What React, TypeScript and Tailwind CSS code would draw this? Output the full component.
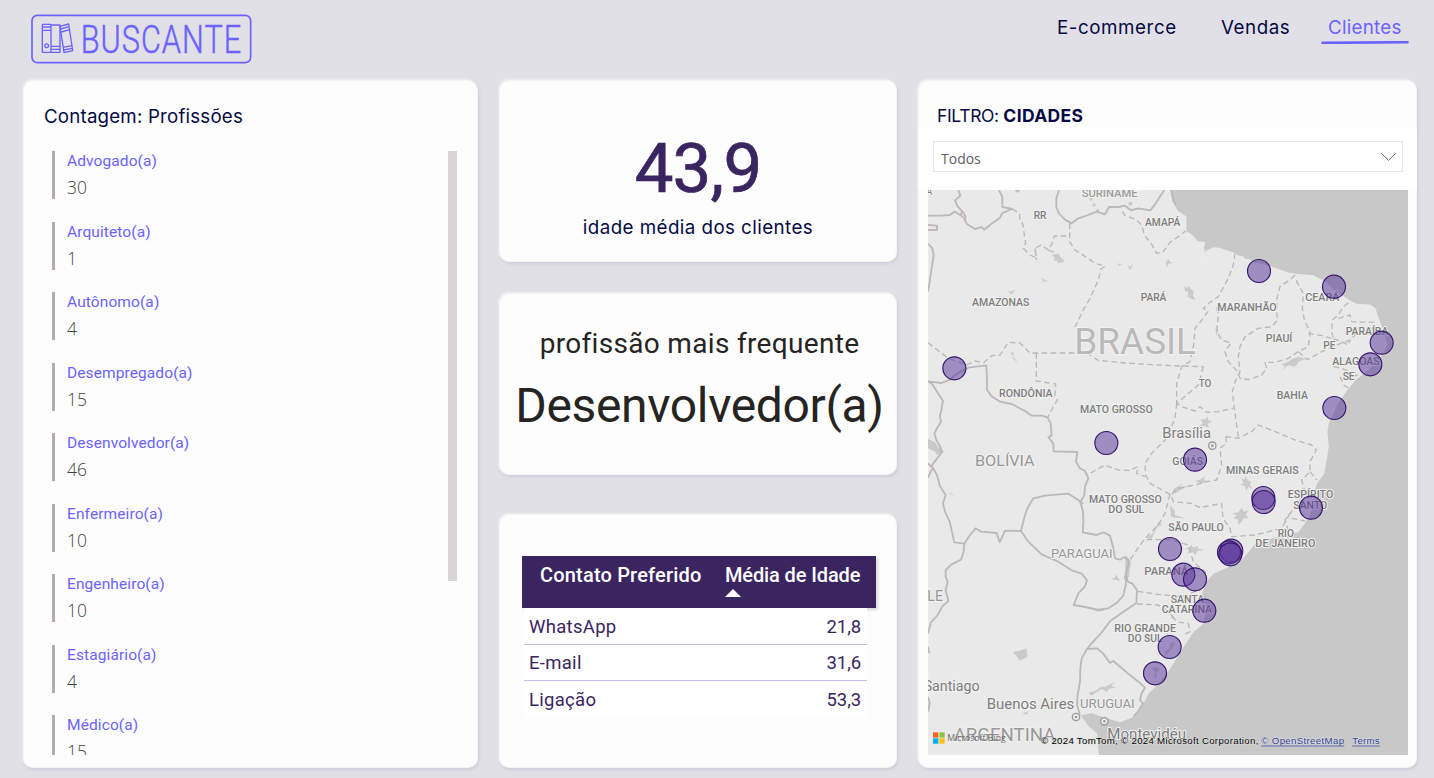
import type { ReactNode } from "react";

const professions: [string, number][] = [
  ["Advogado(a)", 30],
  ["Arquiteto(a)", 1],
  ["Autônomo(a)", 4],
  ["Desempregado(a)", 15],
  ["Desenvolvedor(a)", 46],
  ["Enfermeiro(a)", 10],
  ["Engenheiro(a)", 10],
  ["Estagiário(a)", 4],
  ["Médico(a)", 15],
];

const contacts = [
  ["WhatsApp", "21,8"],
  ["E-mail", "31,6"],
  ["Ligação", "53,3"],
];

// Map space: three units per pixel. text, left, right, baseline, size, colour
type Label = [string, number, number, number, number, string];
const dark = "#7d7d7d";
const mid = "#979797";
const labels: Label[] = [
  ["A", 4, 22, 30, 30, dark],
  ["SURINAME", 470, 638, 35, 34, "#9c9c9c"],
  ["RR", 326, 364, 102, 34, dark],
  ["AMAPÁ", 660, 766, 123, 34, dark],
  ["AMAZONAS", 141, 313, 362, 34, dark],
  ["PARÁ", 647, 724, 348, 34, dark],
  ["BRASIL", 448, 813, 507, 110, "#b9b9b9"],
  ["MARANHÃO", 877, 1055, 377, 34, dark],
  ["CEARÁ", 1141, 1243, 348, 34, dark],
  ["PIAUÍ", 1022, 1102, 471, 34, dark],
  ["PARAÍBA", 1262, 1390, 450, 34, dark],
  ["PE", 1195, 1231, 491, 34, dark],
  ["ALAGOAS", 1222, 1364, 540, 34, dark],
  ["SE", 1253, 1289, 584, 34, dark],
  ["TO", 821, 859, 605, 34, dark],
  ["RONDÔNIA", 222, 383, 636, 34, dark],
  ["MATO GROSSO", 465, 683, 684, 34, dark],
  ["BAHIA", 1055, 1149, 642, 34, dark],
  ["Brasília", 712, 858, 758, 45, dark],
  ["BOLÍVIA", 150, 329, 844, 44, mid],
  ["GOIÁS", 742, 834, 840, 34, dark],
  ["MINAS GERAIS", 903, 1121, 868, 34, dark],
  ["MATO GROSSO", 492, 710, 953, 34, dark],
  ["DO SUL", 550, 658, 984, 34, dark],
  ["ESPÍRITO", 1088, 1225, 940, 34, dark],
  ["SANTO", 1105, 1207, 972, 34, dark],
  ["SÃO PAULO", 730, 896, 1039, 34, dark],
  ["RIO", 1058, 1107, 1056, 34, dark],
  ["DE JANEIRO", 991, 1171, 1087, 34, dark],
  ["PARAGUAI", 378, 563, 1118, 40, mid],
  ["PARANÁ", 658, 790, 1169, 34, dark],
  ["SANTA", 737, 838, 1254, 34, dark],
  ["CATARINA", 710, 861, 1285, 34, dark],
  ["RIO GRANDE", 568, 753, 1340, 34, dark],
  ["DO SUL", 608, 713, 1370, 34, dark],
  ["LE", 7, 54, 1248, 43, mid],
  ["Santiago", -4, 164, 1518, 45, dark],
  ["Buenos Aires", 185, 448, 1572, 45, dark],
  ["URUGUAI", 465, 629, 1569, 40, mid],
  ["ARGENTINA", 86, 391, 1669, 56, mid],
  ["Montevidéu", 547, 783, 1661, 45, dark],
];

const bubbles = [
  [88, 550], [1002, 258], [1227, 305], [1370, 473], [1336, 538], [1228, 669],
  [544, 774], [810, 824], [1015, 939], [1016, 951], [1158, 968], [919, 1097],
  [912, 1102], [916, 1108], [735, 1092], [775, 1169], [810, 1183], [838, 1277],
  [734, 1386], [690, 1465],
];

const countryBorders = [
  // Colombia and Venezuela
  "M9 92H45L75 90L88 80L106 90L112 80L98 64L90 46L106 32L100 15",
  "M106 90L118 100L125 116L150 132L170 126L177 134L200 116L225 98L232 84L262 72L232 66L232 36L222 15",
  "M9 120L36 122V135H9",
  "M112 78L122 96L118 108",
  "M272 15L277 20L284 15",
  // Guianas
  "M402 15L394 40L394 66L402 86L420 104L440 115L460 100L490 90L515 80L540 88L552 66L580 66L600 62L618 76L640 70L676 76L690 58L708 30L718 15",
  "M738 15L744 38L752 60",
  // Peru, Acre and Rondônia
  "M9 176L22 190L26 210L20 250L14 290L9 320",
  "M9 589L50 594L75 584L90 570L130 548L184 541L186 575L186 615L200 634L225 650L260 657L300 678L320 692L352 692L368 698L377 715L380 752L370 756L385 776L386 799L457 801L453 830L465 850L480 858L490 880L480 905L478 930L466 952L474 980L475 1010L473 1042L515 1050L535 1042L555 1052L565 1090L570 1120L585 1124L598 1116L612 1128L606 1155L600 1180",
  // Bolivia west side and Chile
  "M9 590L20 595L36 620L54 648L48 680L44 694L48 710L35 732L28 745L34 766L46 785L50 802L20 842L36 870L45 904L62 930L54 955L60 980L74 1010L88 1072L118 1076L135 1050L152 1030L168 1040L215 1044L224 1072L240 1037L288 1038L300 990L308 968L325 940L360 932L430 926L460 945L474 957",
  "M9 835L22 848M9 878L18 858L24 850",
  "M118 1076L116 1100L108 1124L80 1138L62 1155L62 1175L68 1190L62 1214L70 1248L52 1264L38 1290L18 1312L9 1345",
  "M9 1385L13 1405M9 1536L14 1553L10 1580",
  // Paraguay
  "M288 1038L310 1070L350 1108L400 1130L440 1156L470 1166L486 1186L480 1204L460 1225L446 1260L480 1266L520 1275L550 1270L575 1254L595 1232L602 1200L604 1170L608 1190L622 1196L636 1215L634 1254L590 1284L556 1308L530 1342L500 1375L486 1392L470 1420L466 1450L465 1490L458 1530L456 1560L465 1590",
  "M486 1392L516 1390L535 1406L555 1434L565 1428L586 1446L610 1466L640 1490L660 1508L650 1525L645 1545L654 1555L640 1578L625 1595",
];

const stateBorders = [
  "M262 72L284 85L284 100L294 120L298 150L302 175L295 190L315 210L334 218L330 190L348 180L370 195L380 178L388 153H434",
  "M434 115V170L450 195L480 214L510 235L540 244L528 252L520 285L495 340L475 375L450 426",
  "M370 195L395 207M330 190L334 225",
  "M592 80L600 92L630 102L650 120L658 150L680 178L695 205L715 200L735 172L760 155L782 138",
  "M9 473L70 520L125 540L150 528L175 534L200 512L225 510L250 472L285 474L315 504H485L520 526L600 534L735 542L835 545",
  "M334 504L334 588L392 597L390 632L397 645L385 665L368 698",
  "M930 205L925 240L910 280L880 335L855 352L835 370L850 378L835 400L810 430L806 480L795 530L770 545L755 595L755 655",
  "M875 368L880 390L875 440L890 465L918 474L900 500L910 530L938 560L945 580L970 584L1010 570L1025 550L1020 532L1050 532L1090 520L1120 500L1150 485L1155 440L1138 405L1132 370L1135 325L1115 290L1118 278",
  "M1110 270L1098 282L1065 305L1055 345L1055 385L1058 405L1040 425L1000 430L960 455L945 485L940 515L945 560L930 590L922 620L928 670L935 720L940 758",
  "M1150 445L1190 452L1225 462L1220 440L1222 405L1240 390L1255 365L1275 350",
  "M1120 500L1148 524L1190 500L1240 478L1275 465L1290 450L1320 430L1355 430",
  "M1225 462L1250 470L1270 480L1275 465M1240 400L1275 390L1280 410L1350 412",
  "M1225 545L1250 550L1300 570L1275 578M1245 575L1258 602L1272 610",
  "M835 545L820 600L755 655L770 665L810 678L825 665L845 682L880 680L900 675L925 670",
  "M755 655L750 700L735 735L720 765L680 805L660 835L662 870L675 895L735 928",
  "M497 864L540 840L580 855L615 856L638 845L635 865L660 875",
  "M902 755L905 775L885 790L890 840L875 885L845 890L810 900L760 910L738 930L745 950L800 955L825 968L890 955L894 1000L915 1030L920 1055L990 1050L1070 1030L1095 985",
  "M902 755L940 760L980 740L1000 720L1040 735L1110 765L1160 780L1174 795L1155 830L1155 860L1130 885L1140 920L1115 960L1080 1005L1090 1035",
  "M1155 860L1175 885M1100 1000L1140 1008",
  "M735 928L720 985L700 1020L660 1060L635 1095L615 1125",
  "M665 1064H735L790 1080L805 1130L840 1160L845 1180",
  "M638 1219L700 1228L770 1235L825 1214",
  "M636 1257L700 1260L730 1280L750 1302",
  "M740 1295L760 1312L790 1315L795 1340L775 1350",
];

const cityPatches = [
  "M380 210L390 208L402 206L405 215L420 228L410 233L396 234L398 228L385 226L390 219Z",
  "M345 278L358 284L370 288L360 289L352 292L354 286Z",
  "M244 322L270 316L262 326L254 331L258 323Z",
  "M576 236L592 236L584 242ZM608 240L614 246L626 238L614 256Z",
  "M724 250V230L730 222L735 230L744 234L730 236Z",
  "M256 500L268 505L262 512L280 534L265 522Z",
  "M777 304L786 310L792 302L797 312L806 318L804 332L812 345L800 342L788 335L790 322L780 318Z",
  "M1070 538L1090 530L1100 522L1120 515L1144 522L1124 528L1110 545L1090 541L1066 560L1080 545Z",
  "M826 705L842 702L848 694L850 706L862 710L848 716L852 728L838 722L820 726L834 714Z",
  "M9 762L30 772L40 786L58 800L36 810L30 800L9 790Z",
  "M70 920L90 935L76 928Z",
  "M948 880L958 884L962 872L968 886L980 892L974 898L984 912L970 905L964 917L958 902L946 900L956 893Z",
  "M922 985L940 982L950 968L956 980L970 976L962 990L972 1000L956 1000L950 1010L938 1020L940 1004L924 998L936 992Z",
  "M748 910L762 902L775 895L765 906L790 902L762 918L752 925L742 918ZM810 888L830 882L840 872L836 886L848 888L830 896Z",
  "M735 960L750 978L750 990L780 1000L755 998L738 996Z",
  "M780 1090L792 1088L798 1080L806 1088L820 1082L816 1090L838 1094L818 1098L810 1110L802 1100L786 1106L794 1095Z",
  "M700 1010L712 1020L696 1026L680 1062L665 1060L684 1044Z",
  "M602 1110L618 1130L612 1175L596 1186L600 1160ZM560 1182L570 1178L572 1168L580 1180L586 1188L570 1184Z",
  "M262 1402L288 1396L304 1390L307 1415L284 1427L274 1412Z",
  "M490 1524L510 1518L530 1505L540 1506L570 1490L558 1504L575 1506L550 1512L545 1522L530 1512L514 1522L500 1532Z",
  "M506 1272L530 1270L545 1268L536 1278L515 1280Z",
  "M290 1588L310 1578L306 1588L296 1588Z",
  "M735 1375L750 1370L742 1390L722 1412L718 1400L734 1390Z",
  "M680 1450L690 1446L704 1450L694 1466L696 1478L686 1476L690 1460Z",
  "M737 15L752 15L756 60L742 50Z",
  "M868 430L876 436L874 420L880 438L872 455L874 441Z",
];

function Card({ className, children }: { className: string; children: ReactNode }) {
  return (
    <section
      className={`rounded-[10px] bg-[#fdfdfd] shadow-[1px_2px_3px_rgba(195,192,212,0.6),-1px_-1px_2px_rgba(255,255,255,0.5),inset_0_0_2px_rgba(225,224,230,0.9)] ${className}`}
    >
      {children}
    </section>
  );
}

function Logo() {
  return (
    <svg className="h-[50px] w-[222px]" viewBox="93 43 666 150" fill="none" stroke="#6c63ff">
      <rect x="96" y="47" width="656" height="142" rx="16" strokeWidth="5" />
      <g strokeWidth="4" strokeLinejoin="round">
        <rect x="127" y="74" width="26" height="84" rx="2" />
        <path d="M127 82H153M127 92H153" />
        <circle cx="140" cy="138" r="5.5" />
        <path d="M153 76H180V158H153M153 140H180M153 149H180" />
        <path d="M180 80L206 73L218 153L192 159ZM182 88L207 81M184 97L209 90M189 143L216 138M190 151L217 146" />
      </g>
      <g transform="translate(242 159) scale(0.8 1)">
        <text
          textLength="602"
          strokeWidth="1.5"
          className="fill-[#6c63ff] font-['Roboto',sans-serif] text-[115px] font-light"
        >
          BUSCANTE
        </text>
      </g>
    </svg>
  );
}

function BrazilMap() {
  return (
    <svg className="h-[565px] w-[480px]" viewBox="9 15 1440 1695">
      <rect x="9" y="15" width="1440" height="1695" fill="#c8c8c8" />
      <path
        fill="#e9e9e9"
        stroke="#f2f2f2"
        strokeWidth="2"
        d="M738 15L742 50L757 78L783 95V140L796 146L810 160L817 170L840 172L835 186L838 200L825 222L835 206L850 195L866 188L885 190L900 196L930 205L940 213L955 215L958 222L975 225L986 234L1020 240L1065 255L1090 264L1115 268L1165 272L1200 290L1230 318L1275 348L1295 358L1335 360L1350 370L1360 400L1375 440L1385 480L1370 510L1335 550L1290 585L1262 620L1235 660L1222 690L1210 715L1206 740L1210 785L1197 865L1175 895L1165 925V955L1152 995L1120 1040L1055 1055L990 1075L945 1130L865 1165L843 1190L830 1225L843 1265L835 1315L805 1340L775 1385L735 1450L700 1495L670 1525L650 1565L625 1595L585 1610L535 1595L500 1583L465 1590L490 1625L515 1645L520 1710H9V15Z"
      />
      <g fill="#cacaca">
        {cityPatches.map((d) => (
          <path key={d} d={d} />
        ))}
        <circle cx="498" cy="42" r="5" />
        <circle cx="507" cy="60" r="5" />
        <circle cx="518" cy="76" r="5" />
        <circle cx="616" cy="56" r="6" />
      </g>
      <g fill="none" stroke="#beb9b9" strokeWidth="5.5" strokeLinejoin="round">
        {countryBorders.map((d) => (
          <path key={d} d={d} />
        ))}
      </g>
      <g fill="none" stroke="#bcb8b4" strokeWidth="4" strokeLinejoin="round" strokeDasharray="17 10">
        {stateBorders.map((d) => (
          <path key={d} d={d} />
        ))}
      </g>
      {[[453, 1596], [538, 1609], [862, 782]].map(([x, y]) => (
        <g key={x}>
          <circle cx={x} cy={y} r="11" fill="#eeeeee" stroke="#999999" strokeWidth="4" />
          <circle cx={x} cy={y} r="4" fill="#999999" />
        </g>
      ))}
      <g
        className="font-['Roboto',sans-serif]"
        stroke="#f1f1f1"
        strokeWidth="6"
        strokeLinejoin="round"
        paintOrder="stroke"
      >
        {labels.map(([text, x1, x2, y, size, fill]) => (
          <text
            key={`${text}-${y}`}
            x={x1}
            y={y}
            fontSize={size}
            fontWeight={size === 34 ? 500 : 400}
            fill={fill}
            textLength={x2 - x1}
            lengthAdjust="spacingAndGlyphs"
          >
            {text}
          </text>
        ))}
      </g>
      <g fill="#55309a" fillOpacity="0.5" stroke="#35156c" strokeWidth="3.4">
        {bubbles.map(([x, y]) => (
          <circle key={`${x}-${y}`} cx={x} cy={y} r="34.5" />
        ))}
      </g>
      <path fill="#f26522" d="M24 1642H40V1658H24Z" />
      <path fill="#8dc63f" d="M43 1642H59V1658H43Z" />
      <path fill="#00aeef" d="M24 1660H40V1676H24Z" />
      <path fill="#ffc20e" d="M43 1660H59V1676H43Z" />
      <text x="67" y="1669" textLength="175" lengthAdjust="spacingAndGlyphs" className="fill-[#707070] font-['Open_Sans',sans-serif] text-[27px]">
        Microsoft Bing
      </text>
      <g
        className="font-['Liberation_Sans',sans-serif] text-[29px]"
        stroke="#e0e0e0"
        strokeWidth="3"
        paintOrder="stroke"
      >
        <text x="348" y="1676" textLength="652" fill="#000000">
          © 2024 TomTom, © 2024 Microsoft Corporation,
        </text>
        <text x="1009" y="1676" textLength="248" fill="#2f4193">
          © OpenStreetMap
        </text>
        <text x="1282" y="1676" textLength="82" fill="#2f4193">
          Terms
        </text>
      </g>
      <path stroke="#5b6fae" strokeWidth="3.5" d="M1009 1683H1258M1282 1683H1364" />
    </svg>
  );
}

export default function App() {
  return (
    <div className="flex h-[778px] w-[1434px] flex-col overflow-hidden bg-[#e1e0e6] font-['Roboto',sans-serif]">
      <header className="flex h-20 shrink-0 justify-between pt-3.5 pr-[25px] pl-[31px]">
        <Logo />
        <nav className="flex pt-px font-['Inter',sans-serif] text-[18.8px] leading-[26px] tracking-[0.55px] text-[#050a44]">
          <span className="w-[164px]">E-commerce</span>
          <span className="w-[100px]">Vendas</span>
          <span className="flex w-[88px] flex-col text-[#6c63ff]">
            <span className="pl-[7px] tracking-[0.25px]">Clientes</span>
            <svg className="h-[3px] w-[88px]" viewBox="0 0 88 3">
              <path d="M1.5 1.9L86.5 1.2" stroke="#6c63ff" strokeWidth="2.6" strokeLinecap="round" />
            </svg>
          </span>
        </nav>
      </header>

      <main className="flex h-[688px] gap-[21px] pl-[23px]">
        <Card className="flex w-[455px] flex-col">
          <h2 className="mt-6 ml-[21px] h-[26px] font-['Inter',sans-serif] text-[18.7px] leading-[26px] tracking-[0.2px] text-[#050a44]">
            Contagem: Profissões
          </h2>
          <div className="mt-[21px] flex h-[604px] justify-between overflow-hidden pr-[21px] pl-[29px]">
            <ul className="flex flex-col gap-[22.5px]">
              {professions.map(([name, total]) => (
                <li key={name} className="h-12 shrink-0 border-l-[3px] border-[#b3ada9] pl-3">
                  <div className="h-[25px] text-[15.5px] leading-5 tracking-[0.1px] text-[#6c63ff]">{name}</div>
                  <div className="font-['Open_Sans',sans-serif] text-[17.5px] leading-[22px] font-light text-[#444444]">
                    {total}
                  </div>
                </li>
              ))}
            </ul>
            <div className="h-[430px] w-[9px] bg-[#d6d5d3]" />
          </div>
        </Card>

        <div className="flex w-[398px] flex-col">
          <Card className="flex h-[182px] flex-col items-center">
            <div className="mt-[49px] h-20 text-[69px] leading-[80px] tracking-[-0.8px] text-[#3a2561]">
              <span className="[-webkit-text-stroke:0.7px_#3a2561]">43,9</span>
            </div>
            <div className="mt-[6px] font-['Inter',sans-serif] text-[18.8px] leading-[26px] tracking-[0.42px] text-[#050a44]">
              idade média dos clientes
            </div>
          </Card>
          <Card className="mt-[31px] flex h-[182px] flex-col items-center">
            <div className="mt-[31px] h-10 pl-[3px] text-[28px] leading-10 tracking-[0.32px] whitespace-nowrap text-[#252423]">
              profissão mais frequente
            </div>
            <div className="mt-[10px] pl-[3px] text-[48px] leading-[64px] tracking-[-0.35px] whitespace-nowrap text-[#252423]">
              Desenvolvedor(a)
            </div>
          </Card>
          <Card className="mt-[39px] h-[254px] pt-[42px] pl-[23px]">
            <div className="flex h-[52px] w-[354px] bg-[#3a2561] pt-[7px] text-[20px] leading-6 font-medium whitespace-nowrap text-white shadow-[2px_2px_3px_rgba(0,0,0,0.15)]">
              <div className="w-[203px] pl-[18px] tracking-[0.18px]">Contato Preferido</div>
              <div className="tracking-[-0.12px]">
                Média de Idade
                <svg className="mt-0.5 h-2 w-4" viewBox="0 0 16 8">
                  <path d="M0 8L8 0L16 8Z" fill="#ffffff" />
                </svg>
              </div>
            </div>
            <div className="ml-0.5 w-[343px] bg-white text-[18.5px] text-[#3a2561]">
              {contacts.map(([name, age]) => (
                <div
                  key={name}
                  className="flex h-[36.5px] items-center justify-between border-b border-[#cbbbe8] pt-1 pr-1.5 pl-[5px] last:border-0"
                >
                  <span className="tracking-[0.3px]">{name}</span>
                  <span className="tracking-[-0.1px]">{age}</span>
                </div>
              ))}
            </div>
          </Card>
        </div>

        <Card className="flex w-[499px] flex-col">
          <h2 className="mt-[23px] ml-[19px] h-[26px] font-['Inter',sans-serif] text-[17.5px] leading-[26px] text-[#050a44]">
            <span className="tracking-[-0.35px]">FILTRO: </span>
            <b className="tracking-[0.35px]">CIDADES</b>
          </h2>
          <div className="bg-white pt-3 pr-3.5 pb-[18px] pl-[15px]">
            <div className="flex h-[31px] items-center justify-between border border-[#e6e6e6] pr-1.5 pl-[7px] font-['Open_Sans',sans-serif] text-[14px] text-[#605e5c]">
              <span className="pt-[3px]">Todos</span>
              <svg className="h-2 w-[15px]" viewBox="0 0 15 8">
                <path d="M0.5 0.5L7.5 7.3L14.5 0.5" fill="none" stroke="#666666" strokeWidth="1" />
              </svg>
            </div>
          </div>
          <div className="ml-2.5">
            <BrazilMap />
          </div>
        </Card>
      </main>
    </div>
  );
}
